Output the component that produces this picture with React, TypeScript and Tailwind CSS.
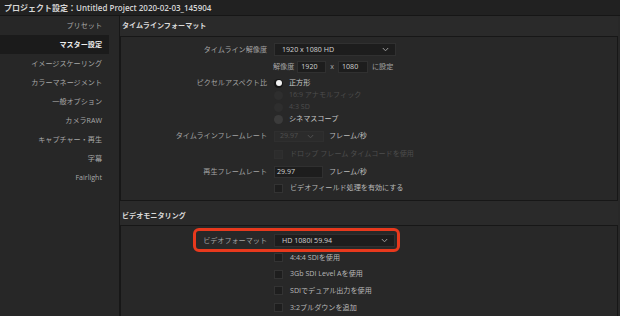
import React from 'react';

const sideItems = [
    'プリセット',
    'マスター設定',
    'イメージスケーリング',
    'カラーマネージメント',
    '一般オプション',
    'カメラRAW',
    'キャプチャー・再生',
    '字幕',
    'Fairlight',
];

const Chevron = () => (
    <svg width="7" height="5" viewBox="0 0 7 5" className="shrink-0">
        <polyline points="0.8,1 3.5,3.8 6.2,1" fill="none" stroke="#9a9a9a" strokeWidth="1" />
    </svg>
);

const Radio = ({ state }: { state: 'on' | 'off' | 'disabled' }) => {
    if (state === 'on') {
        return (
            <div className="w-[9px] h-[9px] rounded-full bg-[#161616] flex items-center justify-center shrink-0">
                <div className="w-[6px] h-[6px] rounded-full bg-[#f2f2f2]" />
            </div>
        );
    }
    return (
        <div
            className={
                state === 'off'
                    ? 'w-[9px] h-[9px] rounded-full bg-[#3b3b3b] shrink-0'
                    : 'w-[9px] h-[9px] rounded-full bg-[#2e2e2e] shrink-0'
            }
        />
    );
};

const Check = ({ disabled }: { disabled?: boolean }) => (
    <div
        className={
            disabled
                ? 'w-[9px] h-[9px] bg-[#2c2c2c] border border-[#2f2f2f] shrink-0'
                : 'w-[9px] h-[9px] bg-[#1e1e1e] border border-[#333333] shrink-0'
        }
    />
);

// one labelled row of the settings grid
const Row = ({ label, h, mt, children }: { label?: string; h: string; mt: string; children?: React.ReactNode }) => (
    <div className={`flex items-center ${h} ${mt}`}>
        <div className="w-[146px] shrink-0 text-right text-[#a4a4a4]">{label}</div>
        <div className="ml-[7px] flex items-center h-full">{children}</div>
    </div>
);

export default function App() {
    return (
        <div className="w-[620px] h-[316px] overflow-hidden bg-[#282828] font-['Open_Sans','Noto_Sans_CJK_JP',sans-serif] text-[7.1px] leading-none flex flex-col">
            {/* Title bar */}
            <div className="h-[16px] shrink-0 bg-[#212121] border-b border-[#161616] flex items-center pl-[4px]">
                <span className="text-[8px] font-semibold text-[#d6d6d6]">
                    プロジェクト設定：Untitled Project 2020-02-03_145904
                </span>
            </div>

            <div className="flex flex-1 min-h-0">
                {/* Sidebar */}
                <div className="w-[120px] shrink-0 bg-[#272727] border-r border-[#171717] flex flex-col">
                    {sideItems.map((item, i) => (
                        <div
                            key={item}
                            className={
                                i === 1
                                    ? 'h-[19px] mr-[10px] pr-[7px] flex items-center justify-end bg-[#1b1b1b] text-[#ededed] font-semibold'
                                    : 'h-[19px] mr-[10px] pr-[7px] flex items-center justify-end text-[#a8a8a8]'
                            }
                        >
                            {item}
                        </div>
                    ))}
                </div>

                {/* Main */}
                <div className="flex-1 flex flex-col pr-[2px]">
                    <div className="h-[20px] shrink-0 bg-[#2a2a2a] flex items-center pl-[2px] text-[#dadada] font-semibold">
                        タイムラインフォーマット
                    </div>
                    <div className="h-[165px] shrink-0 bg-[#282828] border border-[#171717] flex flex-col">
                        <Row label="タイムライン解像度" h="h-[13px]" mt="mt-[6px]">
                            <div className="w-[122px] h-[13px] bg-[#1d1d1d] border border-[#303030] flex items-center justify-between pl-[7px] pr-[6px] text-[#d2d2d2]">
                                <span>1920 x 1080 HD</span>
                                <Chevron />
                            </div>
                        </Row>
                        <Row h="h-[12px]" mt="mt-[5px]">
                            <span className="text-[#a4a4a4] ml-[-1px]">解像度</span>
                            <div className="w-[29px] h-[12px] ml-[3px] bg-[#1d1d1d] border border-[#303030] flex items-center pl-[3px] text-[#d2d2d2]">
                                1920
                            </div>
                            <span className="mx-[4px] text-[#ababab]">x</span>
                            <div className="w-[30px] h-[12px] bg-[#1d1d1d] border border-[#303030] flex items-center pl-[3px] text-[#d2d2d2]">
                                1080
                            </div>
                            <span className="ml-[4px] text-[#a4a4a4]">に設定</span>
                        </Row>
                        <Row label="ピクセルアスペクト比" h="h-[12px]" mt="mt-[4px]">
                            <Radio state="on" />
                            <span className="ml-[6px] text-[#c8c8c8]">正方形</span>
                        </Row>
                        <Row h="h-[12px]" mt="mt-[0px]">
                            <Radio state="disabled" />
                            <span className="ml-[6px] text-[#4d4d4d]">16:9 アナモルフィック</span>
                        </Row>
                        <Row h="h-[12px]" mt="mt-[0px]">
                            <Radio state="disabled" />
                            <span className="ml-[6px] text-[#4d4d4d]">4:3 SD</span>
                        </Row>
                        <Row h="h-[12px]" mt="mt-[0px]">
                            <Radio state="off" />
                            <span className="ml-[6px] text-[#c8c8c8]">シネマスコープ</span>
                        </Row>
                        <Row label="タイムラインフレームレート" h="h-[12px]" mt="mt-[5px]">
                            <div className="w-[50px] h-[11px] bg-[#2b2b2b] border border-[#2f2f2f] flex items-center justify-between pl-[5px] pr-[9px] text-[#505050]">
                                <span>29.97</span>
                                <svg width="7" height="5" viewBox="0 0 7 5" className="shrink-0">
                                    <polyline points="0.8,1 3.5,3.8 6.2,1" fill="none" stroke="#505050" strokeWidth="1" />
                                </svg>
                            </div>
                            <span className="ml-[5px] text-[#bcbcbc]">フレーム/秒</span>
                        </Row>
                        <Row h="h-[12px]" mt="mt-[6px]">
                            <Check disabled />
                            <span className="ml-[7px] text-[#4d4d4d]">ドロップ フレーム タイムコードを使用</span>
                        </Row>
                        <Row label="再生フレームレート" h="h-[12px]" mt="mt-[6px]">
                            <div className="w-[49px] h-[12px] bg-[#1d1d1d] border border-[#303030] flex items-center pl-[2px] text-[#d2d2d2]">
                                29.97
                            </div>
                            <span className="ml-[6px] text-[#bcbcbc]">フレーム/秒</span>
                        </Row>
                        <Row h="h-[12px]" mt="mt-[4px]">
                            <Check />
                            <span className="ml-[7px] text-[#b8b8b8]">ビデオフィールド処理を有効にする</span>
                        </Row>
                    </div>

                    <div className="h-[24px] shrink-0 bg-[#2a2a2a] flex items-center pt-[5px] pl-[2px] text-[#dadada] font-semibold">
                        ビデオモニタリング
                    </div>
                    <div className="flex-1 bg-[#282828] border-l border-r border-t border-[#171717] flex flex-col">
                        <div className="relative">
                            <Row label="ビデオフォーマット" h="h-[13px]" mt="mt-[8px]">
                                <div className="w-[121px] h-[13px] bg-[#1d1d1d] border border-[#303030] flex items-center justify-between pl-[7px] pr-[6px] text-[#d2d2d2]">
                                    <span>HD 1080i 59.94</span>
                                    <Chevron />
                                </div>
                            </Row>
                            {/* highlight marker */}
                            <div className="absolute left-[72px] top-[2px] w-[207px] h-[24px] rounded-[6px] border-[3px] border-[#e8391d] pointer-events-none" />
                        </div>
                        <Row h="h-[16.7px]" mt="mt-[2px]">
                            <Check />
                            <span className="ml-[7px] text-[#b8b8b8]">4:4:4 SDIを使用</span>
                        </Row>
                        <Row h="h-[16.7px]" mt="mt-[0px]">
                            <Check />
                            <span className="ml-[7px] text-[#b8b8b8]">3Gb SDI Level Aを使用</span>
                        </Row>
                        <Row h="h-[16.7px]" mt="mt-[0px]">
                            <Check />
                            <span className="ml-[7px] text-[#b8b8b8]">SDIでデュアル出力を使用</span>
                        </Row>
                        <Row h="h-[16.7px]" mt="mt-[0px]">
                            <Check />
                            <span className="ml-[7px] text-[#b8b8b8]">3:2プルダウンを追加</span>
                        </Row>
                    </div>
                </div>
            </div>
        </div>
    );
}
